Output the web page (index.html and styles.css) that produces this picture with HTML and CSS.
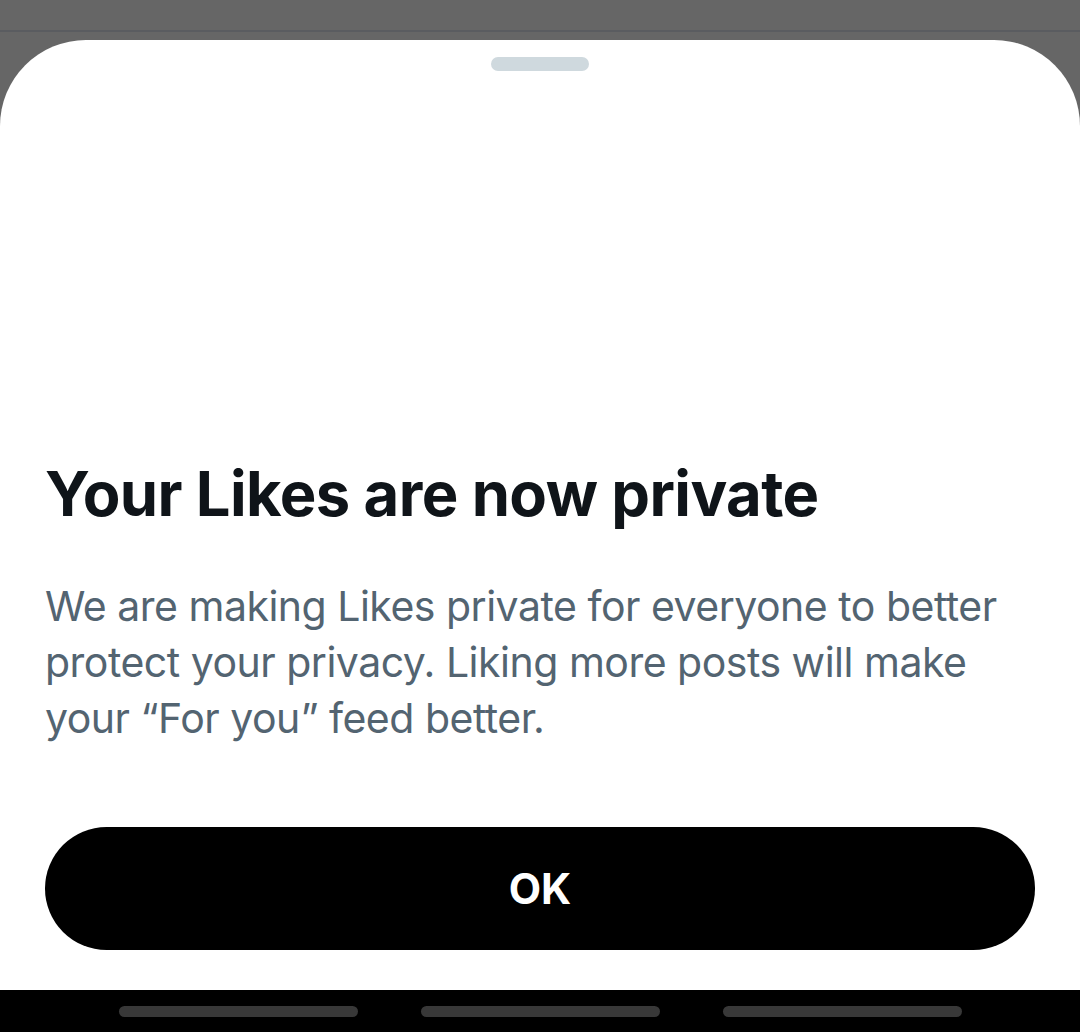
FILE: index.html
```html
<!DOCTYPE html>
<html lang="en">
<head>
<meta charset="utf-8">
<title>Your Likes are now private</title>
<link rel="stylesheet" href="styles.css">
</head>
<body>
<div class="screen">
  <div class="topbar"></div>
  <div class="sheet">
    <div class="handle"></div>
    <div class="content">
      <h1 class="title">Your Likes are now private</h1>
      <p class="desc">We are making Likes private for everyone to better protect your privacy. Liking more posts will make your “For you” feed better.</p>
      <button class="ok">OK</button>
    </div>
  </div>
  <div class="navbar">
    <span class="pill"></span>
    <span class="pill"></span>
    <span class="pill"></span>
  </div>
</div>
</body>
</html>
```
FILE: styles.css
```css
html, body {
  margin: 0;
  padding: 0;
  background: #666666;
}
.screen {
  width: 1080px;
  height: 1032px;
  display: flex;
  flex-direction: column;
  overflow: hidden;
  font-family: "Inter", "Liberation Sans", sans-serif;
}
.topbar {
  height: 30px;
  border-bottom: 2px solid #5a5c60;
  margin-bottom: 8px;
  flex: none;
}
.sheet {
  flex: 1;
  background: #ffffff;
  border-radius: 86px 86px 0 0;
  display: flex;
  flex-direction: column;
  align-items: center;
}
.handle {
  width: 98px;
  height: 14px;
  border-radius: 7px;
  background: #cfd9de;
  margin-top: 17px;
  flex: none;
}
.content {
  align-self: stretch;
  flex: 1;
  display: flex;
  flex-direction: column;
  justify-content: flex-end;
  padding: 0 45px 40px 45px;
}
.title {
  margin: 0 0 48px;
  font-size: 61.5px;
  font-weight: 700;
  line-height: 72px;
  color: #0f1419;
  letter-spacing: -0.6px;
}
.desc {
  margin: 0 0 81px;
  font-size: 41px;
  line-height: 56px;
  color: #536471;
  font-weight: 400;
  letter-spacing: -0.5px;
}
.ok {
  height: 123px;
  border: none;
  border-radius: 62px;
  background: #000000;
  color: #ffffff;
  font-family: "Inter", "Liberation Sans", sans-serif;
  font-size: 42px;
  font-weight: 700;
  padding: 0;
}
.navbar {
  height: 42px;
  flex: none;
  background: #000000;
  display: flex;
  justify-content: center;
  align-items: flex-start;
  gap: 63px;
  padding-top: 16px;
  box-sizing: border-box;
}
.pill {
  width: 239px;
  height: 11px;
  border-radius: 6px;
  background: #383838;
}
```
